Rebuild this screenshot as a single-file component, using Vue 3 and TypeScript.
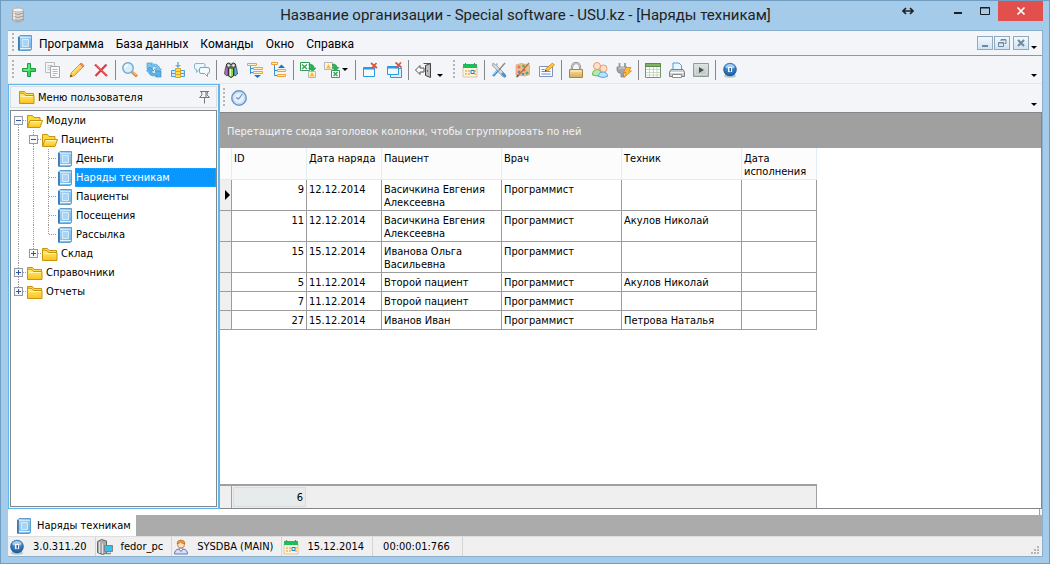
<script setup lang="ts">
import { ref } from 'vue'

interface ToolItem {
  icon?: string
  label?: string
  drop?: boolean
}

interface TreeRow {
  label: string
  icon: string
  guides: string[]
  mark?: string
}

interface Order {
  id: number
  date: string
  patient: string
  doctor: string
  technician: string
  done: string
}

const book =
  '<path d="M1.500 2L3 .500h11.500v14L13 15.500H1.500z" fill="url(#gBook)" stroke="#5f9fd0"/><path d="M2 2v13" stroke="#2f6ea8" stroke-width="1.500"/><path d="M5.500 4.500h6v7h-6z" fill="#a9d4f3" stroke="#d3eafa"/><path d="M3 13.500h11" stroke="#e9f5fd"/><path d="M3 2.500h11" stroke="#cfe8f9"/>'

const calendar =
  '<path d="M1 5h14v10H1z" fill="#fdf3df" stroke="#d9b98a" stroke-width=".8"/><path d="M1 2h14v4H1z" fill="#19c05a"/><path d="M3.500 1v2M12.500 1v2" stroke="#777" stroke-width="1.200"/><path d="M3 8h2v2H3zM6 8h2v2H6zM12 8h2v2h-2zM3 11h2v2H3zM6 11h2v2H6zM12 11h2v2h-2z" fill="#f3c27c"/><path d="M9 8.500h3v3H9z" fill="#fff" stroke="#1c7fc4"/>'

const globe =
  '<ellipse cx="8" cy="14" rx="6" ry="1.700" fill="#8aa" opacity=".6"/><circle cx="8" cy="7.500" r="6.800" fill="url(#gBall)"/><path d="M3 5C4.500 1 11.500 1 13 5 11.500 7 4.500 7 3 5z" fill="#c9e0f7" opacity=".75"/><path d="M6 5h4v5H6z" fill="#f2f8fe"/><path d="M7.500 6h1.500v3.500H7.500z" fill="#2a5f9e"/>'

const icons: Record<string, string> = {
  book,
  calendar,
  globe,
  plus: '<path d="M6.500 1.500h3v5h5v3h-5v5h-3v-5h-5v-3h5z" fill="#3fd162" stroke="#16a23c"/><path d="M8 2.500v5.500H2.500" stroke="#9cf0ad" fill="none"/>',
  copy: '<path d="M.500.500h9v10h-9z" fill="#f5f6f6" stroke="#b9bcbd"/><path d="M2.500 3.500h5M2.500 5.500h3M2.500 7.500h3" stroke="#bfc2c3"/><path d="M5.500 4.500h9v11h-9z" fill="#fbfbfb" stroke="#a5a9aa"/><path d="M7.500 7.500h5M7.500 9.500h5M7.500 11.500h5M7.500 13.500h3" stroke="#b5b8b9"/>',
  pencil: '<path d="M1 15l1.500-4.500L11.500 1.500l3 3L5.500 13.500z" fill="#ffcf4d" stroke="#d99a22"/><path d="M3.500 11L12 2.500" stroke="#fff0a8"/><path d="M11 2l1.500-1 2.500 2.500-1 1.500z" fill="#ef8a6a" stroke="#c7684c" stroke-width=".6"/><path d="M1 15l.8-2.400 1.600 1.600z" fill="#444"/>',
  cross: '<path d="M2 2.500L14 14M13.500 2.500L2.500 14" stroke="#dd3b42" stroke-width="2.200"/><path d="M2.500 2.500L13.500 13" stroke="#f77b7b" stroke-width=".7"/>',
  magnifier: '<path d="M10 10l5 4.500" stroke="#d38a38" stroke-width="3"/><path d="M10.500 10l4 3.500" stroke="#ffd089"/><circle cx="6" cy="6" r="5.200" fill="#d7eefb" stroke="#79aad0" stroke-width="1.500"/><path d="M3 6a3 3 0 013-3" stroke="#fff" stroke-width="1.500" fill="none"/>',
  refresh: '<path d="M1 1h5.500L5 3c4-2 8-.500 9 4h1.500L12 11 8 7h2.500C10 4.500 8 4 6 5.500L7 7H1z" fill="#7cc4ee" stroke="#3b93cc" stroke-width=".6"/><path d="M15 15H9.500L11 13c-4 2-8 .500-9-4H.500L4 5l4 4H5.500C6 11.500 8 12 10 10.500L9 9h6z" fill="#5fb2e4" stroke="#2b86c4" stroke-width=".6"/>',
  insert: '<path d="M1.500 8.500h4v6h-4zM10.500 8.500h4v6h-4z" fill="#d5ebfb" stroke="#4d9ed8"/><path d="M1.500 11.500h13" stroke="#4d9ed8"/><path d="M5.500 6.500h5v9h-5z" fill="#ffe04a" stroke="#dba528"/><path d="M5.500 9.500h5M5.500 12.500h5" stroke="#dba528"/><path d="M8 0v4" stroke="#6db0df" stroke-width="1.500"/><path d="M5 3h6L8 6z" fill="#6db0df"/>',
  chat: '<path d="M2 1.500h7.500q1.500 0 1.500 1.500v3q0 1.500-1.500 1.500H5l-2.500 3v-3Q.500 7.500.500 6V3q0-1.500 1.500-1.500z" fill="#eef7fc" stroke="#86b5d6"/><path d="M7 5.500h7q1.500 0 1.500 1.500v3q0 1.500-1.500 1.500h-.500v3L10.500 11.500H7q-1.500 0-1.500-1.500V7q0-1.500 1.500-1.500z" fill="#f4fbff" stroke="#6fa8d1"/>',
  binoculars: '<path d="M3 5q0-4 2.500-4 2 0 2.500 2 .500-2 2.500-2Q13 1 13 5z" fill="#8b8b8b" stroke="#333"/><circle cx="5.500" cy="3.500" r="1.200" fill="#eee"/><circle cx="10.500" cy="3.500" r="1.200" fill="#eee"/><path d="M2.500 5.500L5 5v8l-1 1-2.500-2z" fill="#b86bc6" stroke="#444" stroke-width=".8"/><path d="M11 5l2.500.500L14.500 12 12 14l-1-1z" fill="#58a8d8" stroke="#444" stroke-width=".8"/><path d="M5.500 6h5v8q-2.500 3-5 0z" fill="#8fdc3a" stroke="#333"/><path d="M7.500 7v7" stroke="#e6ffc2"/>',
  expand: '<path d="M.500 1.500h9v2h-9zM6.500 5.500h9v2h-9zM6.500 9.500h9v2h-9z" fill="#ffefc6" stroke="#eda337"/><path d="M3.500 4v8M3.500 6.500H6M3.500 10.500H6" stroke="#3a8fce" fill="none"/><path d="M7 13h7l-3.500 3z" fill="#1676c2"/>',
  collapse: '<path d="M.500.500h6v2h-6zM6.500 7.500h8v2h-8zM6.500 12.500h8v2h-8z" fill="#ffefc6" stroke="#eda337"/><path d="M3.500 3v10.500M3.500 8.500H6M3.500 13.500H6" stroke="#3a8fce" fill="none"/><path d="M7 6h7l-3.500-3.500z" fill="#1676c2"/>',
  exportExcel: '<path d="M.500.500h9v8h-9z" fill="#fff" stroke="#2e9f55"/><path d="M2 2.500l5 4.500M7 2.500L2 7" stroke="#35a45b" stroke-width="1.500"/><path d="M9 2q5 0 5 4h2l-3.500 3.500L8.500 6H11q0-2-2-2z" fill="#22b652" stroke="#12893a" stroke-width=".5"/><path d="M8.500 9.500h7v6h-7z" fill="#fff5d8" stroke="#b7b7b7"/><path d="M9.500 14.500l2.500-4.500 2.500 4.500z" fill="#f9bb3c"/>',
  importExcel: '<path d="M.500.500h8v7h-8z" fill="#fff5d8" stroke="#b7b7b7"/><path d="M2 6.500L4.500 2 7 6.500z" fill="#f9bb3c"/><path d="M8.500 2q4.500 0 4.500 3.500h2L11.500 9 8 5.500h2.500q0-1.500-2-1.500z" fill="#22b652" stroke="#12893a" stroke-width=".5"/><path d="M7.500 8.500h8v7h-8z" fill="#fff" stroke="#2e9f55"/><path d="M9.500 10l4 4M13.500 10l-4 4" stroke="#35a45b" stroke-width="1.500"/>',
  closeWindow: '<path d="M1.500 5.500h11v9h-11z" fill="#f2faff" stroke="#2b9be0"/><path d="M1.500 6.500h11" stroke="#2b9be0" stroke-width="2"/><path d="M9 1l6 5M14.500 1l-5 5.500" stroke="#d9543f" stroke-width="1.700"/>',
  closeAll: '<path d="M4.500 6.500h11v9h-11z" fill="#d9effc" stroke="#2b9be0"/><path d="M1.500 4.500h11v8h-11z" fill="#f2faff" stroke="#2b9be0"/><path d="M1.500 5.500h11" stroke="#2b9be0" stroke-width="2"/><path d="M9.500.500l6 5M15 .500l-5 5.500" stroke="#d9543f" stroke-width="1.700"/>',
  exit: '<path d="M8.500 1.500h7v12" fill="none" stroke="#555"/><path d="M10.500 3.500l5-2v14l-5-2z" fill="#bdbdbd" stroke="#444"/><path d="M12 9h1" stroke="#222"/><path d="M.500 8L5 3.500V6h4v4H5v2.500z" fill="#fafafa" stroke="#555"/>',
  tools: '<path d="M2 1l-.500 3 2 1.500 8 9 2.500.500.500-2.500-8.500-8.500L6 1.500 4.500 3z" fill="#d8dadb" stroke="#8e9293" stroke-width=".8"/><path d="M14 1L7.500 8.500" stroke="#888" stroke-width="1.300"/><path d="M7 8.500L2 14" stroke="#3a93d6" stroke-width="2.500"/><path d="M6.500 8.500L2 13" stroke="#9bd0f5"/><path d="M11 11l3.500 4" stroke="#3a93d6" stroke-width="2.500"/>',
  palette: '<path d="M1 3l5-1.500 8.500 1.500v9.500L10 14l-9-1z" fill="#eec08f" stroke="#d79a5b" stroke-width=".6"/><circle cx="4" cy="5" r="1.600" fill="#e3706b"/><circle cx="8.500" cy="4" r="1.500" fill="#63b161"/><circle cx="4" cy="10" r="1.500" fill="#8a72c5"/><circle cx="9" cy="8" r="1.600" fill="#eb6d43"/><circle cx="12" cy="11" r="1.600" fill="#58a86e"/><circle cx="8" cy="12" r="1.300" fill="#478ed0"/><path d="M2 15L14 1" stroke="#b3764a" stroke-width="1.300"/><path d="M1 15.500l1.500-3 1.500 1.500z" fill="#555"/>',
  form: '<path d="M.500 4.500h13v10H.500z" fill="#f9fbff" stroke="#7d93c7"/><path d="M2.500 7.500h3M2.500 9.500h9M2.500 12h9" stroke="#7291d2"/><path d="M6 9.500l1-3L13.500 1l2 2L9 8.500z" fill="#ffc437" stroke="#ce8a1b" stroke-width=".8"/><path d="M6 9.500l.6-1.700 1.200 1z" fill="#222"/>',
  lock: '<path d="M4 8V5a4 4 0 018 0v3" fill="none" stroke="#888" stroke-width="2.200"/><path d="M4 7V5a4 4 0 018 0v2" fill="none" stroke="#ddd" stroke-width=".8"/><path d="M1.500 7.500h13v8h-13z" fill="url(#gGold)" stroke="#a88542"/><path d="M2.500 9h11" stroke="#fff2c2"/>',
  people: '<path d="M.500 13q0-5.500 4.500-5.500T9.500 13q-4.500 2-9 0z" fill="#b6e8a7" stroke="#65b85a"/><circle cx="5" cy="4" r="3.500" fill="#fde0cd" stroke="#e59f6d"/><path d="M6.500 14.500q0-4.500 4.500-4.500t4.500 4.500q-4.500 2-9 0z" fill="#b9e2fb" stroke="#57a7df"/><circle cx="11.500" cy="6.500" r="3.500" fill="#fde0cd" stroke="#e59f6d"/>',
  plug: '<path d="M3.500 1v4M9 1v4" stroke="#999" stroke-width="1.800"/><path d="M1 5h10v3q0 3-3.500 3.500V15H5v-3.500Q1 11 1 8z" fill="#a3a6a7" stroke="#777" stroke-width=".7"/><path d="M2.500 6h7" stroke="#ddd"/><path d="M10 5.500h5l-2 3.500h2.500L8 15.500l2-5H7.500z" fill="#ffbd36" stroke="#e57c1e" stroke-width=".8"/>',
  table: '<path d="M.500 1.500h15v14H.500z" fill="#fff" stroke="#76946a"/><path d="M.500 1.500h15v3H.500z" fill="#83b267" stroke="#5d8a48"/><path d="M4.500 5v10M8.500 5v10M12 5v10M1 7.500h14M1 10.500h14M1 13h14" stroke="#bdd0b5" stroke-width=".8"/>',
  printer: '<path d="M4 8V1h6l2.500 2.500V8z" fill="#eaf6ff" stroke="#4f9bd5"/><path d="M2 7.500h12l1.500 2.500v4.500H.500V10z" fill="#ccd0d2" stroke="#7b8184"/><path d="M1.500 10.500h13" stroke="#fff"/><path d="M3.500 12.500h9v3h-9z" fill="#fff" stroke="#8a8f92"/>',
  play: '<path d="M.500 1.500h15v13H.500z" fill="url(#gGrey)" stroke="#8f9b98"/><path d="M2.500 3.500h11v9h-11z" fill="none" stroke="#d5dddb"/><path d="M6 5l5 3-5 3z" fill="#4a5553"/>',
  clock: '<circle cx="8" cy="8" r="7.200" fill="#e4f1fd" stroke="#6a96c7" stroke-width="1.500"/><circle cx="8" cy="8" r="5.500" fill="none" stroke="#b9d6f2"/><path d="M11.500 4L7.500 9 5 7.500" fill="none" stroke="#6f8fb3" stroke-width="1.200"/>',
  folder: '<path d="M.500 2.500h5l1.500 2h7.500v3H.500z" fill="#ffdd55" stroke="#c9940e"/><path d="M.500 4v10.500h14.500V6.500H6.500L5 4.500z" fill="url(#gFolder)" stroke="#c9940e"/><path d="M2.500 7.500h11" stroke="#fff6b4"/>',
  folderOpen: '<path d="M.500 14.500v-12h5l1.500 2h6v3" fill="#ffd83c" stroke="#c9940e"/><path d="M.500 14.500L3 7.500h12.500L13 14.500z" fill="url(#gFolder)" stroke="#c9940e"/><path d="M4 8.500h10" stroke="#fff6b4"/>',
  server: '<path d="M.500 2.500l4-2 5 1.500v12l-4 1.500-5-2z" fill="#a9abac" stroke="#666"/><path d="M2.500 3v11M5.500 4.500V14.500" stroke="#dedede"/><path d="M7.500 6.500h8v6h-8z" fill="#38bdec" stroke="#77848c"/><path d="M9 14.500h5" stroke="#888" stroke-width="1.500"/>',
  user: '<path d="M1.500 15q0-4.500 4.500-5h4q4.500.5 4.500 5z" fill="#d7def5" stroke="#6478b5"/><path d="M6 10l2 2.500L10 10" fill="#fff" stroke="#6478b5"/><circle cx="8" cy="5.500" r="3.500" fill="#ffdfb9" stroke="#d58837"/><path d="M4 5Q4 1 8 1t4 4Q9 5 7.500 3 6 5 4 5z" fill="#e99b37" stroke="#ac681c" stroke-width=".6"/>',
  pin: '<path d="M4 2.500h9M5.500 3q2 3-2 5.500h10q-4-2.500-2-5.500M8.500 9v5.500" fill="none" stroke="#777"/><path d="M10 3v5" stroke="#999" stroke-width="1.500"/>'
}

const menu: string[] = ['Программа', 'База данных', 'Команды', 'Окно', 'Справка']

const mainTools: ToolItem[] = [
  { icon: 'plus', label: 'Добавить' },
  { icon: 'copy', label: 'Копировать' },
  { icon: 'pencil', label: 'Изменить' },
  { icon: 'cross', label: 'Удалить' },
  {},
  { icon: 'magnifier', label: 'Поиск' },
  { icon: 'refresh', label: 'Обновить' },
  { icon: 'insert', label: 'Колонки' },
  { icon: 'chat', label: 'Сообщения' },
  {},
  { icon: 'binoculars', label: 'Найти' },
  { icon: 'expand', label: 'Развернуть' },
  { icon: 'collapse', label: 'Свернуть' },
  {},
  { icon: 'exportExcel', label: 'Экспорт' },
  { icon: 'importExcel', label: 'Импорт', drop: true },
  {},
  { icon: 'closeWindow', label: 'Закрыть окно' },
  { icon: 'closeAll', label: 'Закрыть все' },
  {},
  { icon: 'exit', label: 'Выход' }
]

const extraTools: ToolItem[] = [
  { icon: 'calendar', label: 'Календарь' },
  {},
  { icon: 'tools', label: 'Настройки' },
  { icon: 'palette', label: 'Оформление' },
  { icon: 'form', label: 'Форма' },
  {},
  { icon: 'lock', label: 'Блокировка' },
  { icon: 'people', label: 'Пользователи' },
  { icon: 'plug', label: 'Подключение' },
  {},
  { icon: 'table', label: 'Таблица' },
  { icon: 'printer', label: 'Печать' },
  { icon: 'play', label: 'Видео' },
  {},
  { icon: 'globe', label: 'О программе' }
]

// Line segments drawn inside one 15×19 cell of the tree gutter.
const guidePaths: Record<string, string> = {
  pass: 'M7.5 0V19',
  tee: 'M7.5 0V19M8 9.5H15',
  end: 'M7.5 0V9M8 9.5H15',
  first: 'M7.5 14V19M12 9.5H15',
  box: 'M7.5 0V19M12 9.5H15',
  boxEnd: 'M7.5 0V9M12 9.5H15'
}

const tree: TreeRow[] = [
  { label: 'Модули', icon: 'folderOpen', guides: ['first'], mark: '-' },
  { label: 'Пациенты', icon: 'folderOpen', guides: ['pass', 'box'], mark: '-' },
  { label: 'Деньги', icon: 'book', guides: ['pass', 'pass', 'tee'] },
  { label: 'Наряды техникам', icon: 'book', guides: ['pass', 'pass', 'tee'] },
  { label: 'Пациенты', icon: 'book', guides: ['pass', 'pass', 'tee'] },
  { label: 'Посещения', icon: 'book', guides: ['pass', 'pass', 'tee'] },
  { label: 'Рассылка', icon: 'book', guides: ['pass', 'pass', 'end'] },
  { label: 'Склад', icon: 'folder', guides: ['pass', 'boxEnd'], mark: '+' },
  { label: 'Справочники', icon: 'folder', guides: ['box'], mark: '+' },
  { label: 'Отчеты', icon: 'folder', guides: ['boxEnd'], mark: '+' }
]

const selected = ref(3)
const current = ref(0)

const columns: string[] = ['ID', 'Дата наряда', 'Пациент', 'Врач', 'Техник', 'Дата исполнения']

const orders: Order[] = [
  { id: 9, date: '12.12.2014', patient: 'Васичкина Евгения Алексеевна', doctor: 'Программист', technician: '', done: '' },
  { id: 11, date: '12.12.2014', patient: 'Васичкина Евгения Алексеевна', doctor: 'Программист', technician: 'Акулов Николай', done: '' },
  { id: 15, date: '15.12.2014', patient: 'Иванова Ольга Васильевна', doctor: 'Программист', technician: '', done: '' },
  { id: 5, date: '11.12.2014', patient: 'Второй пациент', doctor: 'Программист', technician: 'Акулов Николай', done: '' },
  { id: 7, date: '11.12.2014', patient: 'Второй пациент', doctor: 'Программист', technician: '', done: '' },
  { id: 27, date: '15.12.2014', patient: 'Иванов Иван', doctor: 'Программист', technician: 'Петрова Наталья', done: '' }
]

const status = [
  { icon: 'globe', text: '3.0.311.20' },
  { icon: 'server', text: 'fedor_pc' },
  { icon: 'user', text: 'SYSDBA (MAIN)' },
  { icon: 'calendar', text: '15.12.2014' },
  { icon: '', text: '00:00:01:766' }
]
</script>

<template>
  <div class="window">
    <header class="title-bar">
      <svg class="app-icon" viewBox="0 0 16 16" aria-hidden="true">
        <defs>
          <linearGradient id="gBook" x1="0" y1="0" x2="1" y2="1">
            <stop offset="0" stop-color="#b4daf4" /><stop offset="1" stop-color="#6db2e4" />
          </linearGradient>
          <radialGradient id="gBall" cx=".5" cy=".35" r=".65">
            <stop offset="0" stop-color="#5fb0ee" /><stop offset="1" stop-color="#174f94" />
          </radialGradient>
          <linearGradient id="gGold" x1="0" y1="0" x2="0" y2="1">
            <stop offset="0" stop-color="#f6dfa0" /><stop offset="1" stop-color="#d5ae5a" />
          </linearGradient>
          <linearGradient id="gGrey" x1="0" y1="0" x2="0" y2="1">
            <stop offset="0" stop-color="#e3e9e7" /><stop offset="1" stop-color="#b5c0bd" />
          </linearGradient>
          <linearGradient id="gFolder" x1="0" y1="0" x2="0" y2="1">
            <stop offset="0" stop-color="#ffee7c" /><stop offset="1" stop-color="#fbc21b" />
          </linearGradient>
        </defs>
        <path d="M2.500 3v10q5.500 4 11 0V3z" fill="#d9d6d2" stroke="#a8a4a0" />
        <path d="M2.500 6q5.500 3 11 0M2.500 9q5.500 3 11 0M2.500 12q5.500 3 11 0" fill="none" stroke="#999" />
        <path d="M4 4v9" stroke="#fff" />
        <ellipse cx="8" cy="3" rx="5.500" ry="2" fill="#f5f3f1" stroke="#b8b4b0" />
      </svg>
      <h1>Название организации - Special software - USU.kz - [Наряды техникам]</h1>
      <div class="window-buttons">
        <svg class="stretch" viewBox="0 0 12 12" aria-hidden="true">
          <path d="M1 6h10M4 3L1 6l3 3M8 3l3 3-3 3" fill="none" stroke="#222" stroke-width="1.700" />
        </svg>
        <button aria-label="Свернуть окно">
          <svg viewBox="0 0 12 12"><path d="M2 8h8" stroke="#1d1d1d" stroke-width="2" /></svg>
        </button>
        <button aria-label="Развернуть окно">
          <svg viewBox="0 0 12 12"><path d="M1.500 2.500h9v7h-9zM1 3h10" fill="none" stroke="#1d1d1d" /></svg>
        </button>
        <button class="close" aria-label="Закрыть">
          <svg viewBox="0 0 12 12"><path d="M2.500 2.500l7 7M9.500 2.500l-7 7" stroke="#fff" stroke-width="1.700" /></svg>
        </button>
      </div>
    </header>

    <div class="client">
      <nav class="menu-bar">
        <span class="grip"></span>
        <svg class="icon" viewBox="0 0 16 16" v-html="icons.book"></svg>
        <div class="menu-items">
          <button v-for="m in menu" :key="m">{{ m }}</button>
        </div>
        <div class="mdi">
          <button aria-label="Свернуть"><svg viewBox="0 0 14 12"><path d="M4 9h6" stroke="#71879a" stroke-width="2" /></svg></button>
          <button aria-label="Восстановить">
            <svg viewBox="0 0 14 12"><path d="M6 4V2.500h5v4H9.500M6 3h5M3.500 5.500h5v4h-5zM3 6h6" fill="none" stroke="#71879a" /></svg>
          </button>
          <button class="apart" aria-label="Закрыть"><svg viewBox="0 0 14 12"><path d="M4 3l6 6M10 3L4 9" stroke="#71879a" stroke-width="2" /></svg></button>
        </div>
        <span class="more"></span>
      </nav>

      <div class="tool-bar">
        <span class="grip"></span>
        <template v-for="(t, i) in mainTools" :key="i">
          <button v-if="t.icon" class="tool" :class="{ drop: t.drop }" :aria-label="t.label">
            <svg class="icon" viewBox="0 0 16 16" v-html="icons[t.icon]"></svg>
            <span v-if="t.drop" class="caret"></span>
          </button>
          <span v-else class="sep"></span>
        </template>
        <span class="more"></span>
        <span class="grip second"></span>
        <template v-for="(t, i) in extraTools" :key="'x' + i">
          <button v-if="t.icon" class="tool" :aria-label="t.label">
            <svg class="icon" viewBox="0 0 16 16" v-html="icons[t.icon]"></svg>
          </button>
          <span v-else class="sep"></span>
        </template>
        <span class="more last"></span>
      </div>

      <div class="body">
        <aside class="side">
          <div class="side-head">
            <svg class="icon" viewBox="0 0 16 16" v-html="icons.folder"></svg>
            <h2>Меню пользователя</h2>
            <button aria-label="Закрепить"><svg class="icon" viewBox="0 0 16 16" v-html="icons.pin"></svg></button>
          </div>
          <ul class="tree">
            <li v-for="(r, i) in tree" :key="i">
              <svg v-for="(g, k) in r.guides" :key="k" class="guide" viewBox="0 0 15 19">
                <path :d="guidePaths[g]" fill="none" stroke="#999" stroke-dasharray="1 1" />
                <template v-if="r.mark && k === r.guides.length - 1">
                  <rect x="3.500" y="5.500" width="8" height="8" fill="#f6f8fa" stroke="#919aa5" />
                  <path :d="r.mark === '+' ? 'M5 9.5h5M7.5 7v5' : 'M5 9.5h5'" stroke="#3553a3" />
                </template>
              </svg>
              <svg class="icon" viewBox="0 0 16 16" v-html="icons[r.icon]"></svg>
              <button :class="{ selected: i === selected }" @click="selected = i">{{ r.label }}</button>
            </li>
          </ul>
        </aside>

        <main class="content">
          <div class="sub-bar">
            <span class="grip"></span>
            <button class="tool" aria-label="Время"><svg class="icon" viewBox="0 0 16 16" v-html="icons.clock"></svg></button>
            <span class="more last"></span>
          </div>
          <div class="grid">
            <p class="group-panel">Перетащите сюда заголовок колонки, чтобы сгруппировать по ней</p>
            <div class="grid-scroll">
              <table>
                <colgroup>
                  <col class="c-mark" /><col class="c-short" /><col class="c-short" />
                  <col class="c-long" /><col class="c-long" /><col class="c-long" /><col class="c-short" />
                </colgroup>
                <thead>
                  <tr>
                    <th></th>
                    <th v-for="c in columns" :key="c" scope="col">{{ c }}</th>
                  </tr>
                </thead>
                <tbody>
                  <tr v-for="(o, i) in orders" :key="o.id" @click="current = i">
                    <td class="mark"><span v-if="i === current" class="pointer"></span></td>
                    <td class="num">{{ o.id }}</td>
                    <td>{{ o.date }}</td>
                    <td>{{ o.patient }}</td>
                    <td>{{ o.doctor }}</td>
                    <td>{{ o.technician }}</td>
                    <td>{{ o.done }}</td>
                  </tr>
                </tbody>
              </table>
            </div>
            <div class="summary">
              <span class="summary-mark"></span>
              <output>{{ orders.length }}</output>
            </div>
          </div>
        </main>
      </div>

      <div class="tabs-edge"></div>
      <div class="tabs">
        <button class="tab">
          <svg class="icon" viewBox="0 0 16 16" v-html="icons.book"></svg>
          <span>Наряды техникам</span>
        </button>
      </div>

      <footer class="status">
        <div v-for="s in status" :key="s.text" class="status-item">
          <svg v-if="s.icon" class="icon" viewBox="0 0 16 16" v-html="icons[s.icon]"></svg>
          <span>{{ s.text }}</span>
        </div>
        <svg class="resize" viewBox="0 0 8 8" aria-hidden="true">
          <path d="M6 0h2v2H6zM3 3h2v2H3zM6 3h2v2H6zM0 6h2v2H0zM3 6h2v2H3zM6 6h2v2H6z" fill="#b5b5b5" />
        </svg>
      </footer>
    </div>
  </div>
</template>

<style>
body {
  margin: 0;
}
</style>

<style scoped>
* {
  box-sizing: border-box;
}

.window {
  display: flex;
  flex-direction: column;
  height: 100vh;
  padding: 0 6px 6px 7px;
  border: 1px solid #709dc0;
  background: #a4cbe9;
  color: #000;
  font: 11px/13px "DejaVu Sans Condensed", "DejaVu Sans", sans-serif;
}

button {
  padding: 0;
  border: 0;
  background: none;
  color: inherit;
  font: inherit;
}

.icon {
  display: block;
  flex: none;
  width: 16px;
  height: 16px;
}

/* Title */
.title-bar {
  display: grid;
  grid-template-columns: 1fr auto 1fr;
  height: 29px;
}

.app-icon {
  width: 16px;
  height: 16px;
  margin: 6px 0 0 2px;
}

.title-bar h1 {
  margin: 0;
  color: #222;
  font: 15px/29px Roboto, "Open Sans", sans-serif;
}

.window-buttons {
  display: flex;
  justify-content: flex-end;
}

.window-buttons button {
  display: flex;
  align-items: center;
  justify-content: center;
  width: 27px;
  height: 20px;
}

.window-buttons svg {
  width: 12px;
  height: 12px;
}

.window-buttons .stretch {
  margin: 4px 30px 0 0;
}

.window-buttons .close {
  width: 45px;
  background: #e2504d;
}

/* Client area */
.client {
  display: flex;
  flex: 1;
  flex-direction: column;
  min-height: 0;
  border: 1px solid #8ab0cd;
  border-left: 0;
  background: #f4f5f8;
}

.grip {
  flex: none;
  width: 2px;
  height: 20px;
  margin: 0 3px 0 4px;
  background: repeating-linear-gradient(#b4b5b8 0 2px, transparent 2px 4px);
}

.more {
  flex: none;
  align-self: flex-end;
  margin: 0 5px 6px 2px;
  border: 3px solid transparent;
  border-top-color: #000;
  border-bottom: 0;
}

.more.last {
  margin-left: auto;
}

.menu-bar {
  display: flex;
  align-items: center;
  height: 25px;
  border-bottom: 1px solid #97979b;
}

.menu-items {
  display: flex;
  gap: 12px;
  margin-left: 6px;
  padding-top: 2px;
  font: 12px/16px Roboto, "Open Sans", sans-serif;
}

.mdi {
  display: flex;
  gap: 1px;
  margin-left: auto;
}

.mdi button {
  width: 16px;
  height: 14px;
  border: 1px solid #91a9bf;
  background: linear-gradient(#f2f8fd, #cfe3f4);
}

.mdi svg {
  display: block;
  width: 14px;
  height: 12px;
}

.mdi .apart {
  margin-left: 2px;
}

.tool-bar {
  display: flex;
  align-items: center;
  height: 28px;
  border-bottom: 1px solid #e3e6ea;
}

.tool {
  display: flex;
  flex: none;
  align-items: center;
  justify-content: center;
  width: 24px;
  height: 24px;
}

.tool.drop {
  justify-content: flex-start;
  width: 33px;
  padding-left: 4px;
}

.caret {
  margin-left: 2px;
  border: 3px solid transparent;
  border-top-color: #000;
  border-bottom: 0;
}

.sep {
  flex: none;
  width: 1px;
  height: 20px;
  margin: 0 2px;
  background: #84868a;
}

.grip.second {
  margin-left: 5px;
}

.body {
  display: flex;
  flex: 1;
  min-height: 0;
}

/* Navigation tree */
.side {
  display: flex;
  flex: none;
  flex-direction: column;
  gap: 2px;
  width: 212px;
  padding: 1px;
  border: 1px solid #5fb6ec;
  border-right-width: 2px;
}

.side-head {
  display: flex;
  align-items: center;
  height: 22px;
  padding: 0 4px 0 8px;
  border: 1px solid #dadcde;
}

.side-head h2 {
  flex: 1;
  margin: 0 0 0 3px;
  font: inherit;
}

.tree {
  flex: 1;
  margin: 0;
  padding: 0;
  border: 1px solid #83878c;
  background: #fff;
  list-style: none;
}

.tree li {
  display: flex;
  align-items: center;
  height: 19px;
}

.guide {
  flex: none;
  width: 15px;
  height: 19px;
}

.tree .icon {
  margin: 0 2px 0 1px;
}

.tree button {
  flex: 1;
  height: 19px;
  padding: 0 1px;
  text-align: left;
}

.tree .selected {
  outline: 1px dotted #d27c30;
  outline-offset: -1px;
  background: #0a97fd;
  color: #fff;
}

/* Content */
.content {
  display: flex;
  flex: 1;
  flex-direction: column;
  min-width: 0;
}

.sub-bar {
  display: flex;
  align-items: center;
  height: 28px;
}

.sub-bar .grip {
  margin: 0 2px 0 3px;
}

.grid {
  display: flex;
  flex: 1;
  flex-direction: column;
  min-height: 0;
  border: 1px solid #85868c;
  border-left: 0;
  background: #fff;
}

.group-panel {
  margin: 0;
  padding: 12px 7px 10px;
  background: #a0a0a0;
  color: #f2f2f2;
}

.grid-scroll {
  flex: 1;
  min-height: 0;
  overflow: hidden;
}

table {
  width: 597px;
  border-spacing: 0;
  table-layout: fixed;
}

.c-mark {
  width: 12px;
}

.c-short {
  width: 75px;
}

.c-long {
  width: 120px;
}

th {
  height: 32px;
  padding: 4px 3px 1px 2px;
  border-right: 1px solid #e3edf5;
  border-bottom: 1px solid #dfeaf3;
  background: #fcfcfd;
  font-weight: normal;
  text-align: left;
  vertical-align: top;
}

td {
  height: 19px;
  padding: 3px 2px 1px 2px;
  border-right: 1px solid #9c9c9c;
  border-bottom: 1px solid #9c9c9c;
  vertical-align: top;
}

.num {
  text-align: right;
}

.mark {
  padding: 0 0 0 5px;
  background: #f0f0f0;
  vertical-align: middle;
}

.pointer {
  display: block;
  width: 5px;
  border: 5px solid transparent;
  border-left-color: #000;
  border-right: 0;
}

.summary {
  display: flex;
  width: 597px;
  height: 24px;
  border-top: 2px solid #a0a0a4;
  border-right: 1px solid #a0a0a4;
  background: #efefef;
}

.summary-mark {
  width: 12px;
  border-right: 1px solid #a0a0a4;
}

.summary output {
  width: 73px;
  margin: 1px;
  padding: 3px 2px 0;
  border: 1px solid #dadcdc;
  background: #e8ebeb;
  text-align: right;
}

/* Window tabs */
.tabs-edge {
  height: 6px;
  margin-right: 2px;
  border-right: 1px solid #a0a0a4;
  background: #fff;
}

.tabs {
  display: flex;
  background: #ababab;
}

.tab {
  display: flex;
  align-items: center;
  gap: 5px;
  height: 21px;
  padding: 0 5px 0 8px;
  background: #fff;
}

.status {
  display: flex;
  align-items: stretch;
  height: 20px;
  border-top: 1px solid #dedede;
  background: #f0f0f0;
}

.status-item {
  display: flex;
  align-items: center;
  gap: 8px;
  padding: 0 8px 0 1px;
  border-right: 1px solid #d5d5d5;
}

.status-item:nth-last-child(2) {
  padding: 0 12px 0 10px;
}

.resize {
  align-self: flex-end;
  width: 8px;
  height: 8px;
  margin: 0 3px 2px auto;
}
</style>
